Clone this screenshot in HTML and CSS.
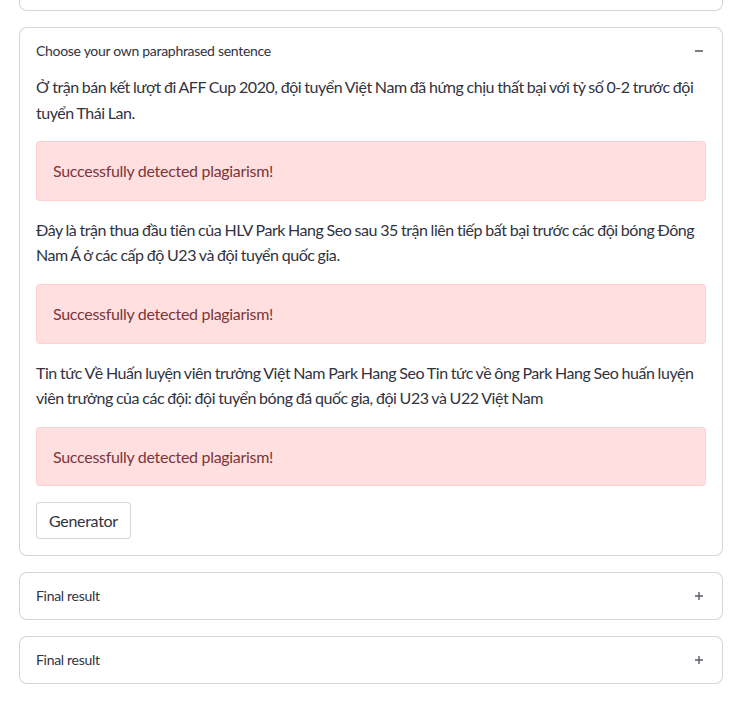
FILE: index.html
```html
<!DOCTYPE html>
<html lang="vi">
<head>
<meta charset="utf-8">
<link rel="stylesheet" href="styles.css">
</head>
<body>
<main class="page">
  <div class="expander expander-cut"></div>

  <section class="expander">
    <div class="exp-header">
      <span class="exp-title">Choose your own paraphrased sentence</span>
      <svg class="exp-icon" width="12" height="12" viewBox="0 0 12 12"><path d="M2 6h8" stroke="#5a5c66" stroke-width="1.6"/></svg>
    </div>
    <div class="exp-body">
      <p class="para">Ở trận bán kết lượt đi AFF Cup 2020, đội tuyển Việt Nam đã hứng chịu thất bại với tỷ số 0-2 trước đội tuyển Thái Lan.</p>
      <div class="alert">Successfully detected plagiarism!</div>
      <p class="para">Đây là trận thua đầu tiên của HLV Park Hang Seo sau 35 trận liên tiếp bất bại trước các đội bóng Đông Nam Á ở các cấp độ U23 và đội tuyển quốc gia.</p>
      <div class="alert">Successfully detected plagiarism!</div>
      <p class="para">Tin tức Về Huấn luyện viên trưởng Việt Nam Park Hang Seo Tin tức về ông Park Hang Seo huấn luyện viên trưởng của các đội: đội tuyển bóng đá quốc gia, đội U23 và U22 Việt Nam</p>
      <div class="alert">Successfully detected plagiarism!</div>
      <div><button class="btn" type="button">Generator</button></div>
    </div>
  </section>

  <section class="expander">
    <div class="exp-header">
      <span class="exp-title">Final result</span>
      <svg class="exp-icon" width="12" height="12" viewBox="0 0 12 12"><path d="M2 6h8M6 2v8" stroke="#5a5c66" stroke-width="1.4"/></svg>
    </div>
  </section>

  <section class="expander">
    <div class="exp-header">
      <span class="exp-title">Final result</span>
      <svg class="exp-icon" width="12" height="12" viewBox="0 0 12 12"><path d="M2 6h8M6 2v8" stroke="#5a5c66" stroke-width="1.4"/></svg>
    </div>
  </section>
</main>
</body>
</html>
```

FILE: styles.css
```css
* { box-sizing: border-box; }
html, body { margin: 0; padding: 0; background: #ffffff; }
body {
  font-family: "Source Sans Pro", Lato, "Noto Sans", sans-serif;
  color: rgb(49, 51, 63);
  font-size: 16px;
  letter-spacing: -0.3px;
}
.page {
  width: 704px;
  margin-left: 19px;
  display: flex;
  flex-direction: column;
  gap: 16px;
}
.expander {
  border: 1px solid rgba(49, 51, 63, 0.2);
  border-radius: 8px;
  background: #fff;
}
.expander-cut {
  height: 11px;
  border-top: none;
  border-top-left-radius: 0;
  border-top-right-radius: 0;
}
.exp-header {
  height: 46px;
  display: flex;
  align-items: center;
  justify-content: space-between;
  padding: 0 16px;
}
.exp-title {
  font-size: 14px;
  line-height: 1;
}
.exp-icon { display: block; margin-right: 1px; }
.exp-body {
  padding: 0 16px 16px;
  display: flex;
  flex-direction: column;
  gap: 16px;
}
.para {
  margin: 0;
  line-height: 25.6px;
  letter-spacing: -0.45px;
  word-spacing: -0.5px;
}
.alert {
  background: rgba(255, 43, 43, 0.15);
  border: 1px solid rgba(255, 43, 43, 0.08);
  color: rgb(125, 53, 59);
  border-radius: 4px;
  padding: 16px;
  line-height: 25.6px;
}
.btn {
  font: inherit;
  letter-spacing: inherit;
  color: rgb(49, 51, 63);
  background: #fff;
  border: 1px solid rgba(49, 51, 63, 0.2);
  border-radius: 4px;
  height: 37px;
  padding: 0 12px;
  cursor: pointer;
}
```
